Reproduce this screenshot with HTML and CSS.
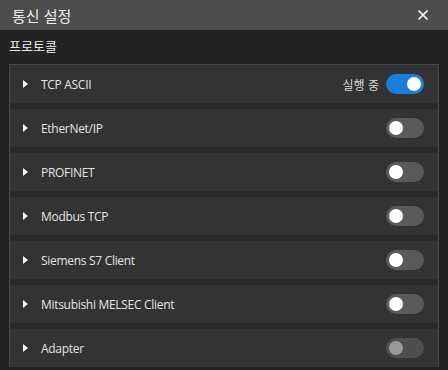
FILE: index.html
```html
<!DOCTYPE html>
<html lang="ko">
<head>
    <meta charset="UTF-8">
    <title>통신 설정</title>
    <link rel="stylesheet" href="styles.css">
</head>
<body>
    <div class="titlebar">
        <span class="title">통신 설정</span>
        <svg class="close" width="10" height="10" viewBox="0 0 10 10">
            <path d="M0.5 0.5 L9.5 9.5 M9.5 0.5 L0.5 9.5" stroke="#f0f0f0" stroke-width="1.6"/>
        </svg>
    </div>
    <div class="content">
        <div class="section">프로토콜</div>
        <div class="list">
            <div class="row">
                <span class="arrow"></span>
                <span class="name">TCP ASCII</span>
                <span class="state">실행 중</span>
                <span class="toggle on"></span>
            </div>
            <div class="row">
                <span class="arrow"></span>
                <span class="name">EtherNet/IP</span>
                <span class="toggle"></span>
            </div>
            <div class="row">
                <span class="arrow"></span>
                <span class="name">PROFINET</span>
                <span class="toggle"></span>
            </div>
            <div class="row">
                <span class="arrow"></span>
                <span class="name">Modbus TCP</span>
                <span class="toggle"></span>
            </div>
            <div class="row">
                <span class="arrow"></span>
                <span class="name">Siemens S7 Client</span>
                <span class="toggle"></span>
            </div>
            <div class="row">
                <span class="arrow"></span>
                <span class="name">Mitsubishi MELSEC Client</span>
                <span class="toggle"></span>
            </div>
            <div class="row">
                <span class="arrow"></span>
                <span class="name">Adapter</span>
                <span class="toggle disabled"></span>
            </div>
        </div>
    </div>
</body>
</html>
```

FILE: styles.css
```css
body {
    margin: 0;
    height: 370px;
    overflow: hidden;
    background: #232323;
    font-family: "Open Sans", "Noto Sans CJK KR", sans-serif;
    color: #e6e6e6;
}
.titlebar {
    height: 30px;
    background: #4d4d4d;
    display: flex;
    align-items: center;
    justify-content: space-between;
    padding: 0 20px 0 12px;
}
.title {
    font-family: "Noto Sans CJK KR", sans-serif;
    font-size: 15px;
    color: #ececec;
}
.content {
    padding: 0 9px 0 9px;
}
.section {
    font-family: "Noto Sans CJK KR", sans-serif;
    font-size: 13px;
    height: 34px;
    line-height: 32px;
    color: #eeeeee;
}
.list {
    width: 428px;
    border: 1px solid #474747;
    border-bottom: none;
    background: #2a2a2a;
    display: flex;
    flex-direction: column;
    gap: 6px;
}
.row {
    height: 38px;
    background: #333333;
    display: flex;
    align-items: center;
    padding: 0 14px 0 13px;
}
.arrow {
    width: 0;
    height: 0;
    border-top: 4px solid transparent;
    border-bottom: 4px solid transparent;
    border-left: 5px solid #f2f2f2;
    margin-right: 13px;
}
.name {
    flex: 1;
    font-size: 12px;
    letter-spacing: -0.3px;
    color: #e4e4e4;
}
.state {
    font-family: "Noto Sans CJK KR", sans-serif;
    font-size: 12px;
    color: #dddddd;
    margin-right: 7px;
}
.toggle {
    position: relative;
    width: 38px;
    height: 20px;
    border-radius: 10px;
    background: #5a5a5a;
}
.toggle::after {
    content: "";
    position: absolute;
    top: 3px;
    left: 3px;
    width: 14px;
    height: 14px;
    border-radius: 50%;
    background: #ffffff;
}
.toggle.on {
    background: #1c7ddb;
}
.toggle.on::after {
    left: 21px;
}
.toggle.disabled {
    background: #4e4e4e;
}
.toggle.disabled::after {
    background: #9a9a9a;
}
```
